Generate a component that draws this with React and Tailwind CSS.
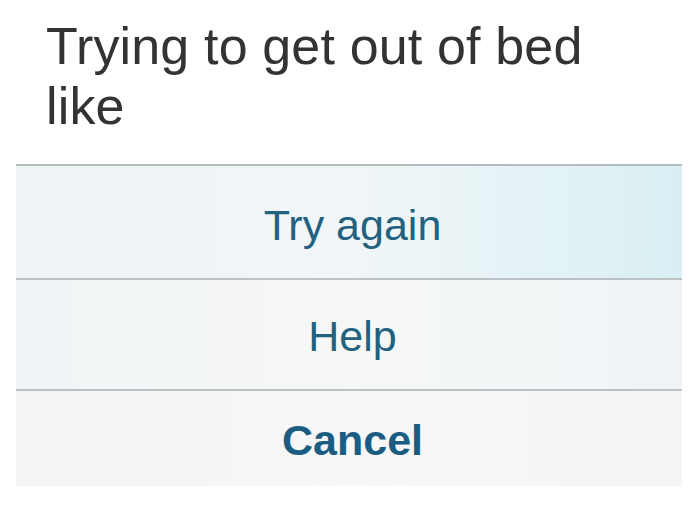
export default function App() {
  const rows = [
    {
      label: "Try again",
      bold: false,
      h: "h-[114px]",
      bg: "bg-gradient-to-r from-[#eef3f6] via-[#f1f6f8] to-[#d9eff3]",
    },
    {
      label: "Help",
      bold: false,
      h: "h-[111px]",
      bg: "bg-gradient-to-r from-[#f1f4f6] via-[#f6f8f6] to-[#eef4f7]",
    },
    {
      label: "Cancel",
      bold: true,
      h: "h-[95px]",
      bg: "bg-gradient-to-r from-[#f3f5f5] via-[#f6f7f6] to-[#f4f6f6]",
    },
  ];

  return (
    <div className="w-[695px] h-[511px] bg-white overflow-hidden font-['Liberation_Sans',Arial,sans-serif]">
      <div className="pt-[16px] pl-[46px] pr-4 text-[52px] leading-[60px] text-[#333333] tracking-[0.15px]">
        Trying to get out of bed
        <br />
        like
      </div>
      <div className="mt-[28px] ml-[16px] w-[666px] border-t-2 border-[#b4bcbd]">
        {rows.map((row, i) => (
          <div
            key={row.label}
            className={`${row.h} ${row.bg} pl-[7px] flex items-center justify-center ${
              i < rows.length - 1 ? "border-b-2 border-[#bcc2c4]" : ""
            }`}
          >
            <span
              className={`text-[43px] ${
                row.bold ? "font-bold text-[#1b5c82]" : "text-[#22627f]"
              } ${i === 0 ? "mt-[6px]" : "mt-[4px]"}`}
            >
              {row.label}
            </span>
          </div>
        ))}
      </div>
    </div>
  );
}
